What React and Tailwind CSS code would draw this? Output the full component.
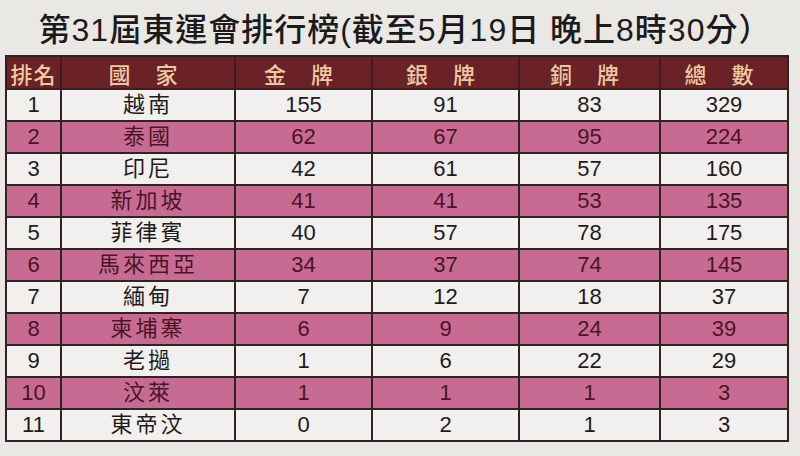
import React from 'react';

const rows = [
  ['1', '越南', 155, 91, 83, 329],
  ['2', '泰國', 62, 67, 95, 224],
  ['3', '印尼', 42, 61, 57, 160],
  ['4', '新加坡', 41, 41, 53, 135],
  ['5', '菲律賓', 40, 57, 78, 175],
  ['6', '馬來西亞', 34, 37, 74, 145],
  ['7', '緬甸', 7, 12, 18, 37],
  ['8', '柬埔寨', 6, 9, 24, 39],
  ['9', '老撾', 1, 6, 22, 29],
  ['10', '汶萊', 1, 1, 1, 3],
  ['11', '東帝汶', 0, 2, 1, 3],
];

const headers = [
  { label: '排名', cls: 'tracking-[1px]' },
  { label: '國 家', cls: 'tracking-[10px]' },
  { label: '金 牌', cls: 'tracking-[10px]' },
  { label: '銀 牌', cls: 'tracking-[10px]' },
  { label: '銅 牌', cls: 'tracking-[10px]' },
  { label: '總 數', cls: 'tracking-[10px]' },
];

const App = () => {
  return (
    <div
      className="w-[800px] h-[456px] overflow-hidden bg-[#e9e8e5] pt-[10px]"
      style={{ fontFamily: '"Liberation Sans", "Noto Sans CJK TC", sans-serif' }}
    >
      <h1 className="text-center text-[32px] leading-[40px] font-medium text-[#1c1a1a] tracking-[1px] pl-[10px]">
        第31屆東運會排行榜(截至5月19日 晚上8時30分）
      </h1>

      <table className="mt-[5px] ml-[5px] border-collapse table-fixed text-[22px]">
        <colgroup>
          <col className="w-[55px]" />
          <col className="w-[174px]" />
          <col className="w-[137px]" />
          <col className="w-[147px]" />
          <col className="w-[141px]" />
          <col className="w-[128px]" />
        </colgroup>
        <thead>
          <tr className="bg-[#6b2227] h-[33px]">
            {headers.map((h) => (
              <th
                key={h.label}
                className={`border-2 border-[#3a1e20] text-[#ecc9a0] text-[22px] font-medium leading-none whitespace-pre ${h.cls}`}
                style={{ fontFamily: '"Noto Sans CJK TC", sans-serif' }}
              >
                {h.label}
              </th>
            ))}
          </tr>
        </thead>
        <tbody>
          {rows.map((r, i) => {
            const pink = i % 2 === 1;
            return (
              <tr
                key={r[0]}
                className={`h-[32px] ${pink ? 'bg-[#c86b93] text-[#4a1527]' : 'bg-[#f1f0ee] text-[#1e1c1c]'}`}
              >
                {r.map((c, j) => (
                  <td
                    key={j}
                    className={`border-2 border-[#2e2424] text-center leading-none ${j === 1 ? 'tracking-[3px]' : ''}`}
                  >
                    {c}
                  </td>
                ))}
              </tr>
            );
          })}
        </tbody>
      </table>
    </div>
  );
};

export default App;
